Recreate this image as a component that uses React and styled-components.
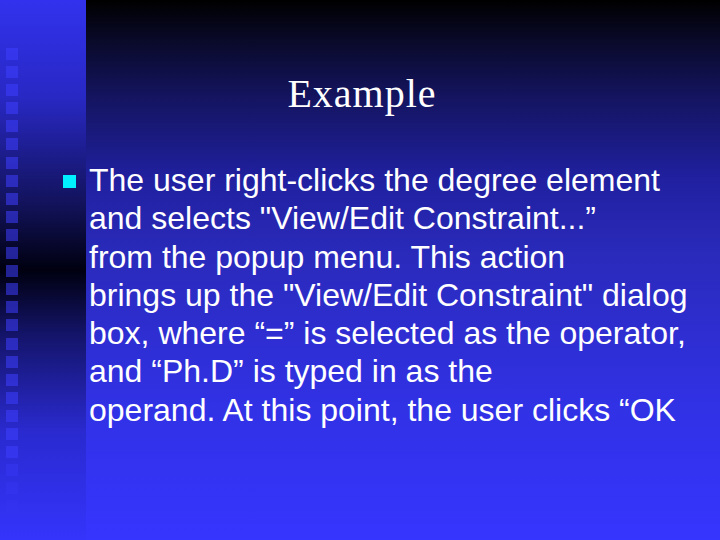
import React from 'react';
import styled, { createGlobalStyle } from 'styled-components';

const GlobalStyle = createGlobalStyle`
  html, body {
    margin: 0;
    padding: 0;
    background: #000;
  }
`;

const Slide = styled.div`
  width: 720px;
  height: 540px;
  display: flex;
  overflow: hidden;
`;

const Strip = styled.aside`
  width: 86px;
  flex-shrink: 0;
  background: linear-gradient(
    to bottom,
    #3232ee 0%,
    #2828c4 18%,
    #12125a 38%,
    #000010 50%,
    #14146a 62%,
    #2a2ad0 80%,
    #3434fc 100%
  );
  display: flex;
  flex-direction: column;
  gap: 6.1px;
  padding: 48px 0 0 6px;
  box-sizing: border-box;
`;

const Square = styled.div`
  width: 12px;
  height: 12px;
  background: rgba(62, 62, 255, 0.55);
  opacity: ${(p) => p.$fade};
`;

const Main = styled.main`
  flex: 1;
  background: linear-gradient(
    to bottom,
    #000000 0%,
    #0a0a2c 8%,
    #141460 18%,
    #2020a0 33%,
    #2a2abb 47%,
    #3131e4 74%,
    #3535ff 100%
  );
  display: flex;
  flex-direction: column;
  padding-top: 72px;
  box-sizing: border-box;
`;

const Title = styled.h1`
  margin: 0 82px 0 0;
  font-family: "Liberation Serif", "Times New Roman", serif;
  font-weight: normal;
  font-size: 40px;
  letter-spacing: 1px;
  line-height: 44px;
  color: #ffffff;
  text-align: center;
`;

const List = styled.ul`
  list-style: none;
  margin: 45px 0 0 -23px;
  padding: 0;
`;

const Item = styled.li`
  display: flex;
  align-items: flex-start;
  gap: 13px;
`;

const Marker = styled.span`
  width: 13px;
  height: 13px;
  flex-shrink: 0;
  margin-top: 14px;
  background: #00f0ff;
`;

const Body = styled.p`
  margin: 0;
  font-family: "Liberation Sans", Arial, sans-serif;
  font-size: 32px;
  line-height: 38.3px;
  color: #ffffff;
  white-space: nowrap;
`;

const lines = [
  'The user right-clicks the degree element',
  'and selects "View/Edit Constraint...\u201D',
  'from the popup menu. This action',
  'brings up the "View/Edit Constraint" dialog',
  'box, where \u201C=\u201D is selected as the operator,',
  'and \u201CPh.D\u201D is typed in as the',
  'operand. At this point, the user clicks \u201COK',
];

const squares = Array.from({ length: 26 }, (_, i) => (i > 22 ? 0.6 - (i - 23) * 0.2 : 1));

export default function App() {
  return (
    <>
      <GlobalStyle />
      <Slide>
        <Strip>
          {squares.map((f, i) => (
            <Square key={i} $fade={f} />
          ))}
        </Strip>
        <Main>
          <Title>Example</Title>
          <List>
            <Item>
              <Marker />
              <Body>
                {lines.map((l, i) => (
                  <React.Fragment key={i}>
                    {l}
                    {i < lines.length - 1 && <br />}
                  </React.Fragment>
                ))}
              </Body>
            </Item>
          </List>
        </Main>
      </Slide>
    </>
  );
}
